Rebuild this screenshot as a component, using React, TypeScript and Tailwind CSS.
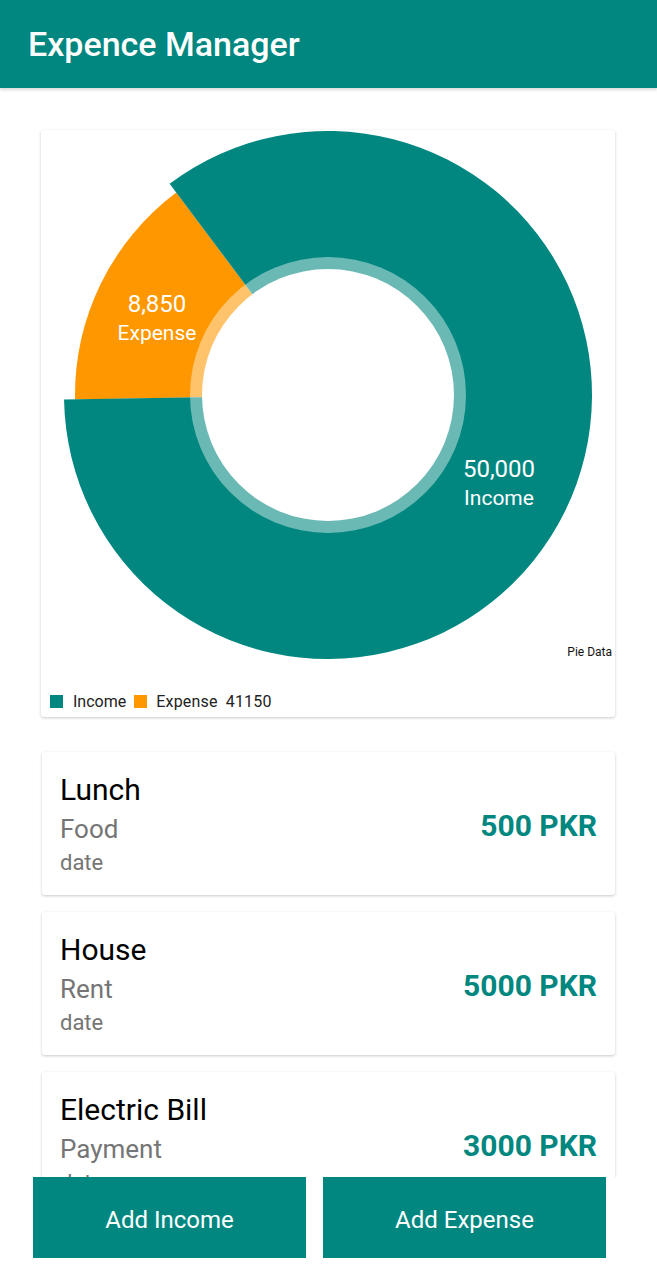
import React from "react";

const TEAL = "#018780";
const ORANGE = "#ff9800";

type Slice = { label: string; value: number; color: string; radius: number };

const slices: Slice[] = [
  { label: "Expense", value: 8850, color: ORANGE, radius: 253 },
  { label: "Income", value: 50000, color: TEAL, radius: 264 },
];

const transactions = [
  { title: "Lunch", category: "Food", date: "date", amount: "500 PKR" },
  { title: "House", category: "Rent", date: "date", amount: "5000 PKR" },
  { title: "Electric Bill", category: "Payment", date: "date", amount: "3000 PKR" },
];

// center of the donut inside the chart canvas
const CX = 287;
const CY = 265;
const START = 179;

function point(angle: number, r: number) {
  const rad = (angle * Math.PI) / 180;
  return [CX + r * Math.cos(rad), CY + r * Math.sin(rad)];
}

function sector(a1: number, a2: number, r: number) {
  const [x1, y1] = point(a1, r);
  const [x2, y2] = point(a2, r);
  const large = a2 - a1 > 180 ? 1 : 0;
  return `M${CX} ${CY} L${x1} ${y1} A${r} ${r} 0 ${large} 1 ${x2} ${y2} Z`;
}

function Donut() {
  const total = slices.reduce((s, x) => s + x.value, 0);
  let angle = START;
  const paths = slices.map((s) => {
    const span = (s.value / total) * 360;
    const d = sector(angle, angle + span, s.radius);
    angle += span;
    return <path key={s.label} d={d} fill={s.color} />;
  });

  return (
    <svg width="574" height="556" viewBox="0 0 574 556" className="block">
      {paths}
      <circle cx={CX} cy={CY} r={138} fill="#ffffff" fillOpacity={0.42} />
      <circle cx={CX} cy={CY} r={126} fill="#ffffff" />
      <g fill="#ffffff" fontFamily="Roboto, sans-serif" textAnchor="middle">
        <text x={116} y={182} fontSize={24}>8,850</text>
        <text x={116} y={210} fontSize={21}>Expense</text>
        <text x={458} y={347} fontSize={24}>50,000</text>
        <text x={458} y={375} fontSize={21}>Income</text>
      </g>
    </svg>
  );
}

function ChartCard() {
  return (
    <div className="flex h-[587px] flex-col rounded-[3px] bg-white shadow-[0_1px_3px_rgba(0,0,0,0.22)]">
      <div className="relative h-[556px]">
        <Donut />
        <span className="absolute right-[3px] top-[515px] text-[12px] leading-[14px] text-[#111]">
          Pie Data
        </span>
      </div>
      <div className="flex h-[31px] items-center pl-[9px] text-[16px] text-[#222]">
        <span className="mr-[10px] h-[13px] w-[13px] bg-[#018780]" />
        <span>Income</span>
        <span className="ml-[8px] mr-[9px] h-[13px] w-[13px] bg-[#ff9800]" />
        <span className="tracking-[0.2px]">Expense</span>
        <span className="ml-[8px] tracking-[0.2px]">41150</span>
      </div>
    </div>
  );
}

function TransactionCard({ title, category, date, amount }: (typeof transactions)[number]) {
  return (
    <div className="flex h-[143px] shrink-0 items-center justify-between rounded-[3px] bg-white pl-[18px] pr-[18px] shadow-[0_1px_3px_rgba(0,0,0,0.22)]">
      <div className="flex h-full flex-col pt-[20px]">
        <span className="text-[30px] leading-[36px] text-black">{title}</span>
        <span className="text-[26px] leading-[42px] text-[#757575]">{category}</span>
        <span className="text-[22px] leading-[26px] text-[#757575]">{date}</span>
      </div>
      <span className="pt-[3px] text-[30px] font-bold text-[#018780]">{amount}</span>
    </div>
  );
}

export default function App() {
  return (
    <div className="flex h-[1280px] flex-col bg-white font-['Roboto',sans-serif]">
      {/* Toolbar */}
      <header className="z-10 flex h-[88px] shrink-0 items-center bg-[#018780] px-[28px] shadow-[0_2px_3px_rgba(0,0,0,0.15)]">
        <h1 className="text-[34px] font-medium text-white">Expence Manager</h1>
      </header>

      <main className="min-h-0 flex-1 overflow-hidden pl-[41px] pr-[42px] pt-[42px]">
        <ChartCard />
        <div className="mt-[35px] flex flex-col gap-[17px] pl-px">
          {transactions.map((t) => (
            <TransactionCard key={t.title} {...t} />
          ))}
        </div>
      </main>

      {/* Bottom buttons */}
      <div className="flex shrink-0 gap-[17px] pb-[22px] pl-[33px]">
        <button className="h-[81px] w-[273px] bg-[#018780] pt-[5px] text-[24px] text-white">Add Income</button>
        <button className="h-[81px] w-[283px] bg-[#018780] pt-[5px] text-[24px] text-white">Add Expense</button>
      </div>
    </div>
  );
}
